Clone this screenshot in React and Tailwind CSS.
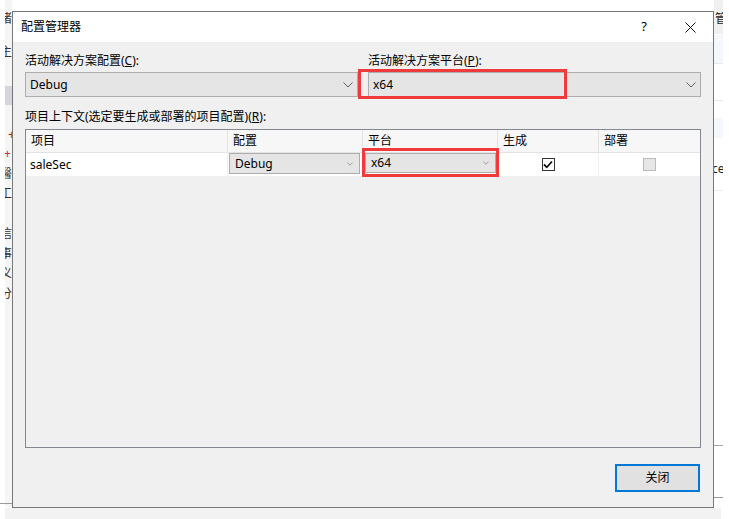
import React from "react";

const font = { fontFamily: "'Noto Sans', 'Noto Sans CJK SC', sans-serif" };

function Chevron({ w = 9, color = "#606060" }) {
  return (
    <svg width={w} height={w / 2 + 1} viewBox="0 0 10 6" fill="none">
      <path d="M0.5 0.5 L5 5 L9.5 0.5" stroke={color} strokeWidth="1" />
    </svg>
  );
}

function Combo({ value, className = "", small = false }) {
  return (
    <div
      className={`flex items-center justify-between bg-[#e5e5e5] border border-[#adadad] text-[#000] ${className}`}
    >
      <span className={small ? "pl-[5px] text-[12px]" : "pl-[4px] text-[12px]"}>{value}</span>
      <span className={small ? "pr-[6px]" : "pr-[4px]"}>
        {small ? <Chevron w={6} color="#707070" /> : <Chevron w={10} color="#606060" />}
      </span>
    </div>
  );
}

export default function App() {
  return (
    <div className="relative w-[729px] h-[519px] bg-white overflow-hidden text-[12px]" style={font}>
      {/* background: left strip */}
      <div className="absolute left-[5px] top-[0px] w-[7px] h-[507px] bg-[#f5f5f5] overflow-hidden text-[12px] leading-none text-[#333]">
        <div className="absolute left-[-5px] top-[13px]">渚</div>
        <div className="absolute left-[-5px] top-[46px]">主</div>
        <div className="absolute left-0 top-[86px] w-[7px] h-[19px] bg-[#d5d5df]"></div>
        <div className="absolute left-[3px] top-[129px] text-[#c03030]">+</div>
        <div className="absolute left-[-1px] top-[148px] text-[#c03030]">+</div>
        <div className="absolute left-[-5px] top-[168px]">醫</div>
        <div className="absolute left-[-5px] top-[188px]">工</div>
        <div className="absolute left-[-5px] top-[208px]">·</div>
        <div className="absolute left-[-5px] top-[228px]">信</div>
        <div className="absolute left-[-5px] top-[248px]">事</div>
        <div className="absolute left-[-5px] top-[268px]">义</div>
        <div className="absolute left-[-5px] top-[288px]">分</div>
      </div>
      <div className="absolute left-0 top-[503px] w-[12px] h-px bg-[#999]"></div>
      <div className="absolute left-[5px] top-[508px] w-[716px] h-[11px] bg-[#f2f2f2]"></div>
      {/* background: right strip */}
      <div className="absolute left-[714px] top-[0px] w-[9px] h-[507px] overflow-hidden text-[12px] leading-none text-[#222]">
        <div className="absolute left-0 top-0 w-[9px] h-[34px] bg-[#f0f0f0]"></div>
        <div className="absolute left-[1px] top-[13px]">管</div>
        <div className="absolute left-0 top-[35px] w-[9px] h-[28px] bg-[#f4f7fb]"></div>
        <div className="absolute left-0 top-[63px] w-[9px] h-px bg-[#e8e8e8]"></div>
        <div className="absolute left-0 top-[100px] w-[9px] h-px bg-[#eaeaea]"></div>
        <div className="absolute left-0 top-[118px] w-[9px] h-[20px] bg-[#f4f7fb]"></div>
        <div className="absolute left-[-2px] top-[163px]">ce</div>
        <div className="absolute left-0 top-[190px] w-[9px] h-px bg-[#eeeeee]"></div>
        <div className="absolute left-0 top-[445px] w-[9px] h-px bg-[#aaa]"></div>
        <div className="absolute left-0 top-[497px] w-[9px] h-px bg-[#999]"></div>
      </div>

      {/* dialog window */}
      <div className="absolute left-[12px] top-[11px] w-[702px] h-[497px] border border-[#777] bg-[#f0f0f0] flex flex-col">
        {/* title bar */}
        <div className="h-[30px] bg-white flex items-center shrink-0">
          <span className="pl-[8px] text-[12px] text-black">配置管理器</span>
          <div className="ml-auto flex items-center">
            <span className="w-[46px] text-center text-[13px] text-black mr-[0px]">?</span>
            <span className="w-[46px] flex justify-center">
              <svg width="11" height="11" viewBox="0 0 11 11">
                <path d="M0.5 0.5 L10.5 10.5 M10.5 0.5 L0.5 10.5" stroke="#111" strokeWidth="1" />
              </svg>
            </span>
          </div>
        </div>

        {/* content */}
        <div className="flex-1 flex flex-col pl-[12px] pr-[12px] pt-[11px]">
          <div className="flex gap-[10px]">
            <div className="w-[333px] flex flex-col">
              <div className="h-[16px] leading-[16px]">
                活动解决方案配置(<u>C</u>):
              </div>
              <Combo value="Debug" className="mt-[3px] h-[25px]" />
            </div>
            <div className="w-[333px] flex flex-col">
              <div className="h-[16px] leading-[16px]">
                活动解决方案平台(<u>P</u>):
              </div>
              <div className="relative mt-[3px]">
                <Combo value="x64" className="h-[25px]" />
                <div className="absolute left-[-10px] top-[-3px] w-[209px] h-[30px] border-[3px] border-[#ef3b3b]"></div>
              </div>
            </div>
          </div>

          <div className="mt-[12px] h-[16px] leading-[16px]">
            项目上下文(选定要生成或部署的项目配置)(<u>R</u>):
          </div>

          {/* table */}
          <div className="mt-[4px] h-[319px] border border-[#828790] bg-[#f0f0f0] flex flex-col">
            <div className="flex h-[23px] bg-[#f7f7f7] border-b border-[#e3e3e3]">
              <div className="w-[202px] pl-[5px] flex items-center border-r border-[#e3e3e3]">项目</div>
              <div className="w-[135px] pl-[5px] flex items-center border-r border-[#e3e3e3]">配置</div>
              <div className="w-[135px] pl-[5px] flex items-center border-r border-[#e3e3e3]">平台</div>
              <div className="w-[101px] pl-[5px] flex items-center border-r border-[#e3e3e3]">生成</div>
              <div className="flex-1 pl-[5px] flex items-center">部署</div>
            </div>
            <div className="flex h-[23px] bg-white">
              <div className="w-[202px] pl-[4px] flex items-center border-r border-[#f0f0f0]">saleSec</div>
              <div className="w-[135px] flex items-start pl-[1px] pt-0 border-r border-[#f0f0f0]">
                <Combo value="Debug" small className="w-[131px] h-[21px]" />
              </div>
              <div className="w-[135px] relative flex items-start pl-[2px] border-r border-[#f0f0f0]">
                <Combo value="x64" small className="w-[131px] h-[20px]" />
                <div className="absolute left-[-1px] top-[-5px] w-[137px] h-[29px] border-[3px] border-[#ef3b3b]"></div>
              </div>
              <div className="w-[101px] flex items-center justify-center border-r border-[#f0f0f0]">
                <div className="w-[13px] h-[13px] border border-[#333] bg-white flex items-center justify-center">
                  <svg width="10" height="9" viewBox="0 0 10 9">
                    <path d="M1 4.5 L3.8 7.3 L9 1.5" stroke="#111" strokeWidth="1.8" fill="none" />
                  </svg>
                </div>
              </div>
              <div className="flex-1 flex items-center justify-center">
                <div className="w-[13px] h-[13px] border border-[#bcbcbc] bg-[#e6e6e6]"></div>
              </div>
            </div>
          </div>

          <div className="mt-[16px] flex justify-end pr-[1px]">
            <button className="w-[85px] h-[28px] border-2 border-[#0078d7] bg-[#e1e1e1] text-[12px] text-black">
              关闭
            </button>
          </div>
        </div>
      </div>
    </div>
  );
}
